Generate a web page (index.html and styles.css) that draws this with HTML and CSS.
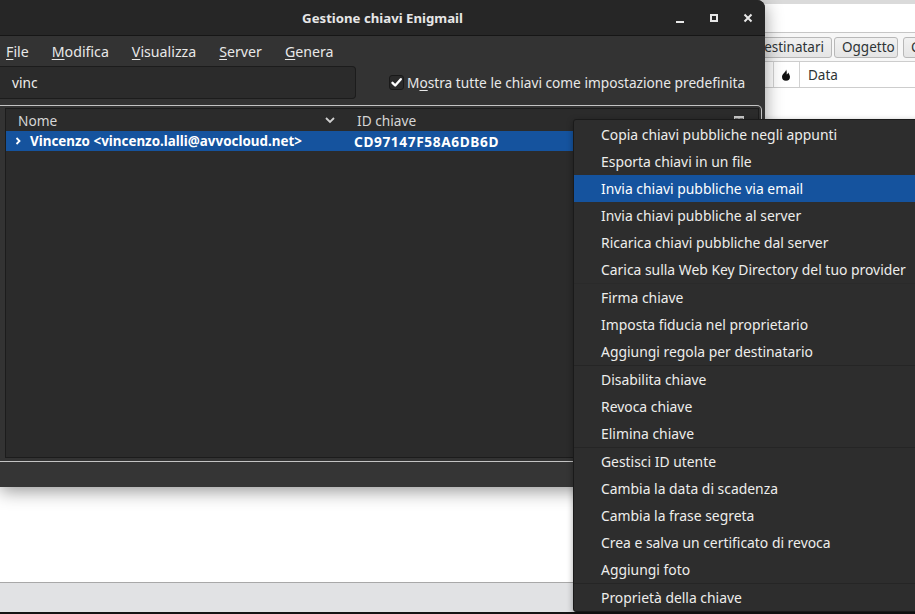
FILE: index.html
```html
<!DOCTYPE html>
<html lang="it">
<head>
<meta charset="utf-8">
<title>Gestione chiavi Enigmail</title>
<link rel="stylesheet" href="styles.css">
</head>
<body>
<div class="mail-app">
  <div class="mail-top"></div>
  <div class="mail-toolbar">
    <div class="mail-spacer"></div>
    <div class="mail-btn btn-dest">Destinatari</div>
    <div class="mail-btn btn-ogg">Oggetto</div>
    <div class="mail-btn btn-corr">Corrispondenti</div>
  </div>
  <div class="mail-header">
    <div class="mh-col mh-first"></div>
    <div class="mh-col mh-icon">
      <svg width="10" height="12" viewBox="0 0 10 12"><path d="M5 0.5C5.3 3 1 4.6 1 7.8A4 4 0 0 0 9 7.8C9 6 7.8 4.8 7.3 3.4C6.9 4.6 6.3 5.1 5.6 5.3C6 3.8 5.9 2 5 0.5Z" fill="#111"/></svg>
    </div>
    <div class="mh-col mh-data">Data</div>
  </div>
  <div class="mail-body"></div>
  <div class="mail-status"></div>
  <div class="screen-edge"></div>
</div>

<div class="enig">
  <div class="enig-title">
    <h1>Gestione chiavi Enigmail</h1>
    <div class="win-ctrls">
      <div class="win-ctrl"><svg width="16" height="16" viewBox="0 0 16 16"><line x1="4" y1="12" x2="12" y2="12" stroke="#e8e8e8" stroke-width="2"/></svg></div>
      <div class="win-ctrl"><svg width="16" height="16" viewBox="0 0 16 16"><rect x="5" y="5" width="6" height="6" fill="none" stroke="#e8e8e8" stroke-width="2"/></svg></div>
      <div class="win-ctrl"><svg width="16" height="16" viewBox="0 0 16 16"><path d="M4.5 4.5L11.5 11.5M11.5 4.5L4.5 11.5" stroke="#e8e8e8" stroke-width="2"/></svg></div>
    </div>
  </div>
  <div class="menubar">
    <span><u>F</u>ile</span>
    <span><u>M</u>odifica</span>
    <span><u>V</u>isualizza</span>
    <span><u>S</u>erver</span>
    <span><u>G</u>enera</span>
  </div>
  <div class="toolbar">
    <div class="search">vinc</div>
    <label class="check-label">
      <span class="checkbox"><svg width="13" height="13" viewBox="0 0 13 13"><path d="M2.5 6.8L5.2 9.5L10.8 3.2" fill="none" stroke="#fff" stroke-width="2.4" stroke-linecap="round" stroke-linejoin="round"/></svg></span>
      <span>M<u>o</u>stra tutte le chiavi come impostazione predefinita</span>
    </label>
  </div>
  <div class="tree-frame">
    <div class="tree">
      <div class="tree-head">
        <div class="th th-name"><span>Nome</span>
          <svg width="12" height="8" viewBox="0 0 12 8"><path d="M2 2L6 6L10 2" fill="none" stroke="#d0d0d0" stroke-width="1.8"/></svg>
        </div>
        <div class="th th-id"><span>ID chiave</span>
          <svg width="10" height="9" viewBox="0 0 10 9"><rect x="0.5" y="0.5" width="9" height="8" fill="none" stroke="#c8c8c8"/><rect x="0.5" y="0.5" width="9" height="2" fill="#c8c8c8"/><line x1="5" y1="2" x2="5" y2="8.5" stroke="#c8c8c8"/><line x1="0.5" y1="5.5" x2="9.5" y2="5.5" stroke="#c8c8c8"/></svg>
        </div>
      </div>
      <div class="tree-row">
        <div class="td td-name">
          <span class="twisty"><svg width="6" height="8" viewBox="0 0 6 8"><path d="M1.5 1L4.5 4L1.5 7" fill="none" stroke="#fff" stroke-width="1.8"/></svg></span>
          <span>Vincenzo &lt;vincenzo.lalli@avvocloud.net&gt;</span>
        </div>
        <div class="td td-id">CD97147F58A6DB6D</div>
      </div>
    </div>
  </div>
  <div class="enig-status"></div>
</div>

<div class="ctx">
  <div class="ctx-item">Copia chiavi pubbliche negli appunti</div>
  <div class="ctx-item">Esporta chiavi in un file</div>
  <div class="ctx-item active">Invia chiavi pubbliche via email</div>
  <div class="ctx-item">Invia chiavi pubbliche al server</div>
  <div class="ctx-item">Ricarica chiavi pubbliche dal server</div>
  <div class="ctx-item">Carica sulla Web Key Directory del tuo provider</div>
  <div class="ctx-sep faint"></div>
  <div class="ctx-item">Firma chiave</div>
  <div class="ctx-item">Imposta fiducia nel proprietario</div>
  <div class="ctx-item">Aggiungi regola per destinatario</div>
  <div class="ctx-sep"></div>
  <div class="ctx-item">Disabilita chiave</div>
  <div class="ctx-item">Revoca chiave</div>
  <div class="ctx-item">Elimina chiave</div>
  <div class="ctx-sep"></div>
  <div class="ctx-item">Gestisci ID utente</div>
  <div class="ctx-item">Cambia la data di scadenza</div>
  <div class="ctx-item">Cambia la frase segreta</div>
  <div class="ctx-item">Crea e salva un certificato di revoca</div>
  <div class="ctx-item">Aggiungi foto</div>
  <div class="ctx-sep"></div>
  <div class="ctx-item">Proprietà della chiave</div>
</div>
</body>
</html>
```
FILE: styles.css
```css
* { box-sizing: border-box; }
html, body { margin: 0; padding: 0; }
body {
  width: 915px;
  height: 614px;
  overflow: hidden;
  position: relative;
  background: #fff;
  font-family: "Noto Sans", "DejaVu Sans", sans-serif;
  font-size: 13.7px;
}

/* Background mail application */
.mail-app {
  display: flex;
  flex-direction: column;
  height: 614px;
  background: #fff;
  color: #2e3436;
}
.mail-top {
  height: 33px;
  flex: none;
  border-top: 4px solid #dadada;
  border-bottom: 1px solid #c6c6c6;
  background: #fff;
}
.mail-toolbar {
  height: 29px;
  flex: none;
  display: flex;
  align-items: center;
  white-space: nowrap;
  background: #f7f7f7;
  border-bottom: 1px solid #cdcdcd;
  overflow: hidden;
}
.mail-spacer { flex: none; width: 737px; }
.mail-btn {
  flex: none;
  height: 21px;
  line-height: 19px;
  padding: 0 7px;
  border: 1px solid #b8b8b8;
  border-radius: 3px;
  background: linear-gradient(#f1f1f1, #e5e5e5);
  color: #2e3436;
  font-size: 13.5px;
}
.btn-dest { width: 95px; text-align: right; }
.btn-ogg { width: 64px; margin-left: 2px; }
.btn-corr { margin-left: 5px; }
.mail-header {
  height: 26px;
  flex: none;
  display: flex;
  align-items: stretch;
  border-bottom: 1px solid #cdcdcd;
  background: #fff;
}
.mh-col { display: flex; align-items: center; }
.mh-first { width: 774px; border-right: 1px solid #d2d2d2; }
.mh-icon { width: 26px; justify-content: center; border-right: 1px solid #d2d2d2; padding-right: 2px; }
.mh-data { padding-left: 8px; font-size: 13.5px; }
.mail-body { flex: 1; background: #fff; }
.mail-status {
  height: 30px;
  flex: none;
  border-top: 1px solid #a8a8a8;
  background: #e1e2e4;
}
.screen-edge { height: 2px; flex: none; background: #141414; }

/* Enigmail key manager window */
.enig {
  position: absolute;
  left: 0;
  top: 0;
  width: 765px;
  height: 487px;
  display: flex;
  flex-direction: column;
  background: #333333;
  color: #eeeeec;
  border-radius: 0 8px 0 0;
  box-shadow: 0 4px 18px rgba(0, 0, 0, 0.42);
  overflow: hidden;
}
.enig-title {
  height: 36px;
  flex: none;
  display: grid;
  grid-template-columns: 1fr auto 1fr;
  align-items: center;
  background: #262626;
  border-bottom: 1px solid #161616;
}
.enig-title h1 {
  grid-column: 2;
  margin: 0;
  font-size: 13.2px;
  font-weight: bold;
  color: #e6e6e6;
}
.win-ctrls { grid-column: 3; justify-self: end; display: flex; align-self: stretch; }
.win-ctrl {
  width: 34px;
  display: flex;
  align-items: center;
  justify-content: center;
}

.menubar {
  height: 30px;
  flex: none;
  display: flex;
  align-items: center;
  gap: 23px;
  padding-left: 6px;
  color: #e8e8e8;
  font-size: 14.2px;
}
u { text-decoration: underline; text-underline-offset: 2px; text-decoration-thickness: 1px; }

.toolbar {
  height: 33px;
  flex: none;
  display: flex;
  align-items: center;
}
.search {
  width: 356px;
  height: 33px;
  display: flex;
  align-items: center;
  padding-left: 12px;
  background: #2b2b2b;
  border: 1px solid #1c1c1c;
  border-left: none;
  border-radius: 0 4px 4px 0;
  color: #eeeeec;
}
.check-label {
  margin-left: 33px;
  display: flex;
  align-items: center;
  gap: 3px;
  color: #e8e8e8;
}
.checkbox {
  width: 15px;
  height: 15px;
  display: flex;
  align-items: center;
  justify-content: center;
  border: 1px solid #191919;
  border-radius: 3px;
  background: #2a2a2a;
}

.tree-frame {
  flex: none;
  height: 357px;
  margin: 6px 3px 0 0;
  padding: 2px 2px 3px 5px;
  border: 1px solid #c4c4c4;
  border-left: none;
  border-radius: 0 5px 5px 0;
}
.tree {
  height: 100%;
  border: 1px solid #1c1c1c;
  background: #2b2b2b;
}
.tree-head {
  height: 22px;
  display: flex;
  align-items: center;
  color: #d6d6d6;
}
.th { display: flex; align-items: center; justify-content: space-between; height: 100%; }
.th-name { width: 339px; padding: 0 9px 0 12px; }
.th-id { flex: 1; padding: 0 14px 0 12px; }
.tree-row {
  height: 20px;
  display: flex;
  align-items: center;
  background: #15539e;
  color: #fff;
  font-weight: bold;
}
.td { display: flex; align-items: center; white-space: nowrap; }
.td-name { width: 339px; padding-left: 9px; font-size: 13.4px; }
.twisty { width: 15px; display: flex; align-items: center; }
.td-id { padding-left: 9px; font-size: 13.7px; letter-spacing: 0.6px; }
.enig-status { flex: 1; background: #353535; }

/* Context menu */
.ctx {
  position: absolute;
  left: 573px;
  top: 119px;
  width: 352px;
  height: 493px;
  padding-top: 1px;
  background: #2d2d2d;
  border: 1px solid #1a1a1a;
  border-radius: 3px;
  color: #eeeeec;
  font-size: 13.9px;
  box-shadow: 0 2px 6px rgba(0, 0, 0, 0.35);
}
.ctx-item {
  height: 27px;
  display: flex;
  align-items: center;
  padding-left: 27px;
  white-space: nowrap;
}
.ctx-item.active { background: #15539e; color: #fff; }
.ctx-sep { height: 1px; background: #252525; }
.ctx-sep.faint { background: #2a2a2a; }
```
